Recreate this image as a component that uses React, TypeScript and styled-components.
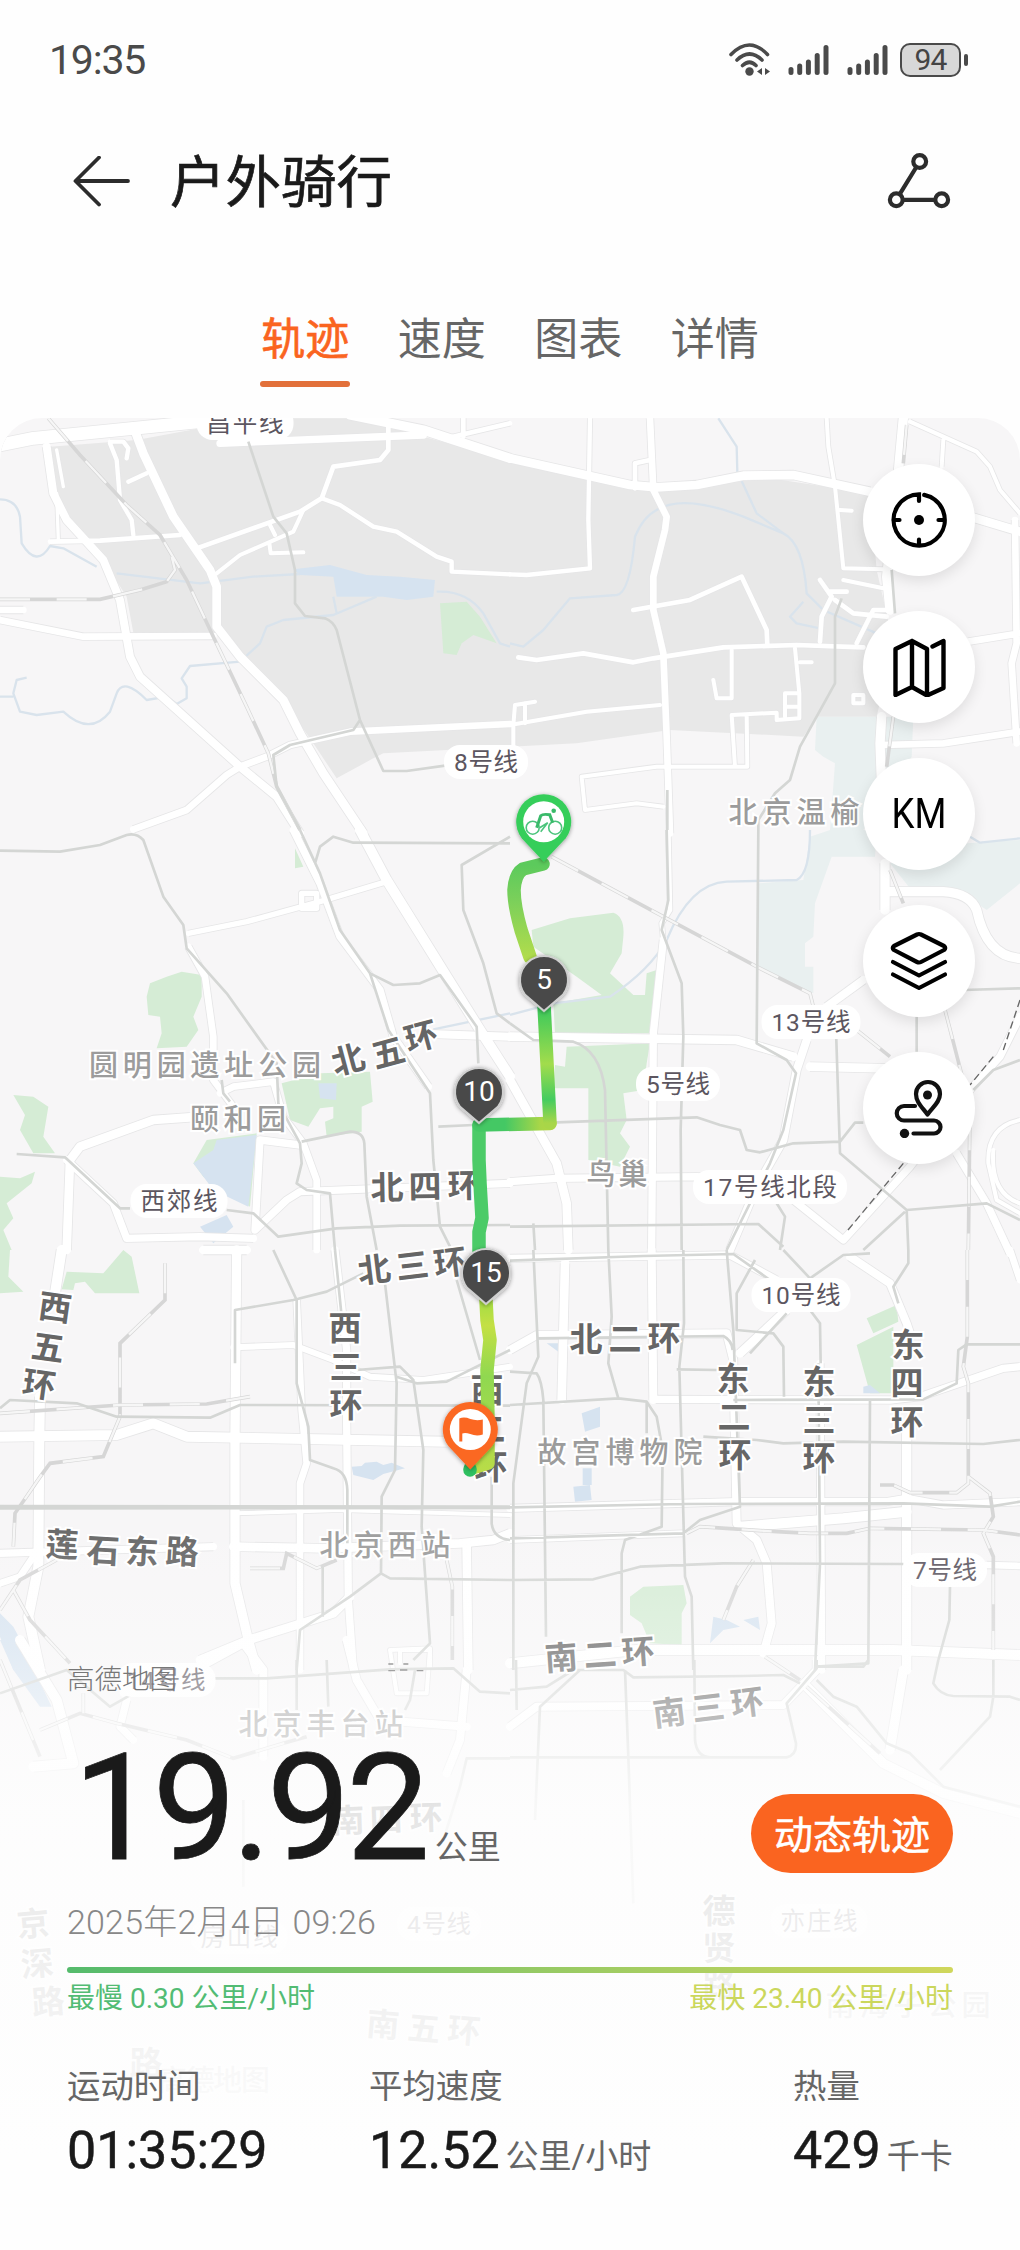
import React from "react";

import styled, { createGlobalStyle } from "styled-components";

const accent = "#FA6420";
const cjk = `"Noto Sans CJK SC", sans-serif`;
const uiFont = `Roboto, "Noto Sans CJK SC", sans-serif`;

const GlobalStyle = createGlobalStyle`
  * {
    box-sizing: border-box;
  }

  body {
    margin: 0;
    background: #fefefe;
    font-family: ${uiFont};
    color: #1a1a1a;
  }
`;

const Screen = styled.div`
  display: flex;
  flex-direction: column;
  width: 1020px;
  height: 2250px;
  overflow: hidden;
  background: #fefefe;
`;

// STATUS BAR //
const StatusBar = styled.div`
  display: flex;
  align-items: center;
  justify-content: space-between;
  height: 120px;
  padding: 0 59px 0 49px;
`;

const Clock = styled.span`
  font-size: 41px;
  line-height: 48px;
  color: #4a4a4a;
  letter-spacing: -1.2px;
`;

const StatusIcons = styled.div`
  display: flex;
  align-items: center;
`;

const SignalPair = styled.div`
  display: flex;
  gap: 18px;
  margin-left: 17px;
`;

const Battery = styled.div`
  position: relative;
  display: flex;
  align-items: center;
  justify-content: center;
  width: 61px;
  height: 34px;
  margin-left: 12px;
  border: 2px solid #4a4a4a;
  border-radius: 10px;
  background: #d8d8d8;
  font-size: 30px;
  line-height: 34px;
  letter-spacing: -0.8px;
  color: #444;

  &::after {
    content: "";
    position: absolute;
    right: -9px;
    top: 9px;
    width: 4px;
    height: 12px;
    border-radius: 2px;
    background: #4a4a4a;
  }
`;

// HEADER //
const Header = styled.header`
  display: flex;
  align-items: center;
  height: 124px;
  padding: 0 69px 0 72px;
`;

const Title = styled.h1`
  flex: 1;
  margin: -8px 0 0 38px;
  font-family: ${cjk};
  font-size: 55.5px;
  font-weight: 400;
  line-height: 70px;
  -webkit-text-stroke: 0.7px #1a1a1a;
`;

const Tabs = styled.nav`
  display: flex;
  justify-content: center;
  gap: 48.5px;
  height: 174px;
  padding-top: 62px;
`;

const Tab = styled.div<{ $active?: boolean }>`
  display: flex;
  flex-direction: column;
  align-items: center;
  font-family: ${cjk};
  font-size: 44px;
  line-height: 60px;
  color: ${(p) => (p.$active ? accent : "#666")};
  -webkit-text-stroke: ${(p) => (p.$active ? `0.6px ${accent}` : "0")};

  &::after {
    content: "";
    width: 90px;
    height: 6px;
    margin: 15px -1px 0;
    border-radius: 3px;
    background: ${(p) => (p.$active ? "#E2703A" : "transparent")};
  }
`;

// MAP PANEL //
const MapPanel = styled.main`
  position: relative;
  display: flex;
  flex-direction: column;
  justify-content: space-between;
  height: 1832px;
  overflow: hidden;
  border-radius: 42px 42px 0 0;
  background: #f7f6f7;
`;

const MapCanvas = styled.svg`
  position: absolute;
  inset: 0;
  width: 1020px;
  height: 1832px;
`;

const Fade = styled.div`
  position: absolute;
  inset: 1100px 0 0;
  background: linear-gradient(
    rgba(254, 254, 254, 0) 0,
    rgba(254, 254, 254, 0.3) 130px,
    rgba(254, 254, 254, 0.55) 195px,
    rgba(254, 254, 254, 0.84) 290px,
    rgba(254, 254, 254, 0.89) 400px,
    rgba(254, 254, 254, 0.94) 560px,
    rgba(254, 254, 254, 1) 640px
  );
`;

const Tools = styled.div`
  position: relative;
  display: flex;
  flex-direction: column;
  align-self: flex-end;
  gap: 35px;
  margin: 46px 45px 0 0;
`;

const ToolButton = styled.div`
  display: flex;
  align-items: center;
  justify-content: center;
  width: 112px;
  height: 112px;
  border-radius: 50%;
  background: #fff;
  box-shadow: 0 5px 14px rgba(0, 0, 0, 0.1);
`;

const UnitText = styled.span`
  font-family: Roboto, sans-serif;
  font-size: 42.5px;
  line-height: 48px;
  color: #000;
  transform: scaleX(0.86);
  white-space: nowrap;
`;

// SUMMARY //
const Summary = styled.section`
  position: relative;
  display: flex;
  flex-direction: column;
  padding: 0 67px 71px;
`;

const Attribution = styled.div`
  height: 32px;
  margin-top: -2px;
  font-family: ${cjk};
  font-size: 27.5px;
  font-weight: 300;
  line-height: 30px;
  color: #777;
`;

const DistanceRow = styled.div`
  display: flex;
  justify-content: space-between;
  height: 148px;
  margin-top: 40px;
`;

const Distance = styled.div`
  display: flex;
  align-items: flex-end;
  padding-left: 6px;
  font-family: Roboto, sans-serif;
  font-size: 149px;
  line-height: 148px;
  letter-spacing: -4.3px;
  -webkit-text-stroke: 0.8px #1a1a1a;
`;

const DistanceUnit = styled.span`
  margin: 0 0 17px 9px;
  font-family: ${cjk};
  font-size: 33px;
  line-height: 40px;
  letter-spacing: 0;
  color: #666;
  -webkit-text-stroke: 0;
`;

const ReplayButton = styled.div`
  width: 202px;
  height: 79px;
  margin-top: 60px;
  border-radius: 40px;
  background: ${accent};
  color: #fff;
  font-family: ${cjk};
  font-size: 39px;
  line-height: 77px;
  text-align: center;
  -webkit-text-stroke: 0.5px #fff;
`;

const DateText = styled.div`
  height: 40px;
  margin-top: 20px;
  font-size: 34px;
  font-weight: 300;
  line-height: 40px;
  letter-spacing: 0.2px;
  color: #888;
`;

const SpeedBar = styled.div`
  height: 6px;
  margin-top: 25px;
  border-radius: 3px;
  background: linear-gradient(90deg, #55bb6c, #92c965 50%, #d0d75c);
`;

const SpeedEnds = styled.div`
  display: flex;
  justify-content: space-between;
  height: 34px;
  margin-top: 8px;
  font-size: 28px;
  line-height: 36px;
`;

const SpeedEnd = styled.span<{ $color: string }>`
  color: ${(p) => p.$color};
  white-space: pre;
`;

const Metrics = styled.div`
  display: grid;
  grid-template-columns: 302px 424px 160px;
  margin-top: 51px;
`;

const MetricLabel = styled.div`
  height: 40px;
  font-family: ${cjk};
  font-size: 33.4px;
  line-height: 36px;
  color: #666;
`;

const MetricValue = styled.div`
  display: flex;
  align-items: baseline;
  height: 60px;
  margin-top: 13px;
  font-size: 52px;
  line-height: 63px;
  white-space: nowrap;
  -webkit-text-stroke: 0.5px #1a1a1a;
`;

const MetricUnit = styled.span`
  margin-left: 6px;
  font-size: 33px;
  color: #666;
  -webkit-text-stroke: 0;
`;

// MAP DATA //
// Every tile is drawn on a grid three times finer than the screen.
type Road = [number, string];

interface Tile {
  x: number;
  y: number;
  built?: string;
  park?: string;
  wet?: string;
  lake?: string;
  stream?: string;
  roads: Road[];
  metro?: string;
  rail?: string;
  dash?: string;
}

const tiles: Tile[] = [
  {
    x: 0,
    y: 410,
    built:
      "M150 110L410 90L600 55L700 25L1080 25L1160 50L1530 150V1010L1150 1030L1120 1045L1010 1105L940 1000L850 870L650 670L400 668L380 560L290 420L170 290Z",
    park: "M1320 580L1400 575L1440 620L1490 700L1420 675L1385 700L1370 735L1330 730Z",
    lake: "M880 478L990 465L1100 495L1200 500L1305 510L1300 560L1220 570L1150 560L1010 560L1000 500L900 495Z",
    stream:
      "M0 268Q50 268 60 320L65 400Q110 475 150 408L190 415L290 470M80 803L50 810L40 850L60 905L110 915L190 905Q270 980 330 905L350 850Q370 800 440 870L500 860L530 882L560 865L560 830L545 805L570 768L720 755L780 700L800 650L850 630L1000 615L1130 560M350 490L600 520L760 500L900 492M0 860L40 860M1000 560L1010 610M1310 545Q1400 540 1450 610L1500 700L1530 710",
    roads: [
      [38, "M0 105L100 85L400 55L600 35"],
      [26, "M400 50L430 130L520 320L630 480L650 530V650L720 740L850 870L900 970L970 1090L1090 1270"],
      [24, "M140 110L160 250L200 330L310 450L360 570L390 740L420 800L720 1070L830 1160L900 1270"],
      [22, "M660 100L1270 75"],
      [28, "M1050 15L1270 60L1530 145"],
      [14, "M1340 85L1530 40M1390 25V80"],
      [14, "M1165 40V120L1140 150L1000 170L965 265L900 305L590 415"],
      [13, "M965 265L1020 285L1120 350L1190 365L1310 440L1355 455V485L1530 493"],
      [12, "M910 300L880 365L720 435L650 490M810 345L825 375M808 400L812 430L910 427"],
      [14, "M150 395L300 392L540 375"],
      [13, "M330 100L350 150L360 270L395 330L400 375M330 95H370L385 115L380 145M385 215L440 190"],
      [10, "M170 120L190 230M170 250L175 390"],
      [20, "M0 630L250 680L640 678M0 600H70"],
      [20, "M400 1258L560 1200L680 1095L720 1070L800 1040L870 1005L1050 965L1530 942"],
    ],
    metro:
      "M745 95L820 320L860 370L885 480V580L915 618L975 625Q1000 635 1010 660L1080 930L1150 1083H1220L1335 1067M1080 930L1060 960L870 1005L820 1035L830 1130L900 1260",
    rail: "M145 25L240 135L380 285L480 375L560 510L640 680L740 890L805 1030L830 1130L900 1260M0 568H300L420 540L500 515L525 480L515 440",
  },
  {
    x: 510,
    y: 410,
    built:
      "M0 150L420 240L780 205L1080 250L1100 480L1150 700L1100 920H920L880 980L480 960L200 1000L0 1010Z",
    wet: "M920 920H1210L1205 1040L1060 1260H960L975 1060L940 1040L915 1020Z",
    stream:
      "M0 700L40 710L100 660L180 565L320 555Q360 550 375 380Q400 320 440 300Q520 250 700 320L820 370Q880 400 890 550L940 600L1100 670M625 25L680 110L682 185L740 310L820 370M930 655L860 640L840 620L880 575",
    roads: [
      [26, "M0 145L360 225L440 232L560 225L700 197L850 195L1080 245M1380 320L1530 365"],
      [20, "M420 25L430 240L470 320L465 360L430 500V600L460 730L470 980L480 1270"],
      [13, "M240 25L235 330L240 475L50 495L0 493"],
      [14, "M375 235V160L420 150"],
      [14, "M25 742L80 750L220 730L370 757L430 745L640 712L860 705L1060 712"],
      [14, "M370 600L540 570L695 500L770 660L772 705"],
      [12, "M950 25L955 110L975 230L1000 475L1120 478M1000 510L1120 535M990 300L1025 302"],
      [14, "M930 695L935 620L965 560L930 510M960 545H1010M975 570L1030 610L1130 620M1040 700L1090 600H1150"],
      [28, "M1180 25L1160 240L1130 500L1140 600M1115 920L1110 1000L1120 1260"],
      [12, "M1200 35L1400 125L1440 170L1470 240L1530 310M1300 90L1295 170"],
      [20, "M1375 695L1530 670M1115 1005L1300 1000L1530 965M1515 330L1520 700L1505 760L1520 1000"],
      [12, "M665 720V865H620L610 810M855 715L868 850V925L800 930V908L665 915L675 1070M710 915L712 1070L440 1070L215 1100L225 1200L380 1180L460 1190M825 850V920M825 850H860M825 890H860M870 757H905M1030 855H1060V880H1030Z"],
      [12, "M0 945L230 905L450 885M10 945L15 885L75 875M45 880V940M10 950V1010"],
    ],
    metro: "M995 565L975 620V820L870 1010L840 1110L795 1150L745 1230V1260M472 1140V1260M1145 480L1155 610",
    rail: "M1190 45L1180 160M1150 920L1130 1070",
  },
  {
    x: 0,
    y: 830,
    park: "M450 460L500 440L545 425L605 435V500L580 560L595 600L560 650L470 655L485 610L480 560L445 555L440 500ZM40 795L100 800L145 830L130 920L165 970H100L60 900L75 855ZM0 1040L60 1045L105 1025L95 1060L20 1120L40 1165L10 1200L35 1260H0ZM845 760L960 730L1110 725L1118 815L1085 830V905L980 920L975 875L1000 865V830L960 835L925 890L870 870ZM885 55L910 110L885 115ZM620 930L770 910L750 1130L610 1040L580 1000Z",
    lake: "M650 930L770 915L745 1130L640 1080L580 1000L640 960ZM600 1190L680 1155L700 1190L640 1240ZM955 760H1010L1008 810L960 805Z",
    stream: "M1300 598L1530 550",
    roads: [
      [20, "M565 350L615 440L640 620V750L700 830"],
      [16, "M565 310L740 275L960 215L1160 155M905 190H950V235H905Z"],
      [22, "M880 0L960 160L1020 320L1140 480L1180 620L1285 770"],
      [30, "M1080 0L1160 150L1340 440L1440 600L1530 740"],
      [24, "M1290 612L1530 620"],
      [26, "M200 1260L210 990L240 950L460 870L600 860"],
      [22, "M200 990L340 1120L380 1225L600 1220L760 1225"],
      [20, "M660 790L700 770L820 755L850 860L910 940L950 1050V1260"],
      [22, "M900 945L780 930L765 1200L860 1110L900 1085L1530 1060"],
    ],
    metro:
      "M0 62L180 65L300 45L380 15Q410 8 430 30L490 200L550 285L560 355L680 490L830 700L835 820L900 940L905 1000L890 1060L920 1080L990 1090L1005 1260M905 935L1050 905Q1090 905 1093 940L1100 1100L1130 1260M900 0L960 130L1020 300L1110 430L1180 465L1260 460L1320 435L1430 590L1435 700M945 100L960 50L1000 20L1060 38L1530 40M1530 20L1385 105L1390 240L1450 400L1490 550L1530 580M1110 430L1165 600L1290 790L1300 990L1320 1190L1350 1250M50 972L195 982L360 1135H390M680 1140L760 1150L835 1220L1010 1195L1200 1187L1530 1185M1315 890L1420 885M665 750L670 790L690 815",
  },
  {
    x: 510,
    y: 830,
    park: "M65 300L180 265L310 248Q345 260 340 320L335 370L300 430L370 495H405L410 430L440 420L430 610H135L130 520L275 495L200 440L70 350ZM170 650L420 640L410 700L400 780L340 790L350 870L330 910L360 950L330 1010L235 990V775H130L135 705L165 710Z",
    wet: "M745 160L880 150L900 20L960 0H1100L1095 80H965L915 220L910 320L885 340V410H910V490L745 410ZM1140 100L1370 40L1530 30V160L1430 240L1340 180L1200 175Z",
    stream:
      "M0 555L130 520L300 500Q420 420 470 330Q540 160 650 155L860 150Q900 130 900 0M1380 20L1410 38L1530 25",
    roads: [
      [26, "M0 620L680 630L850 680M900 710L1130 715"],
      [22, "M460 330L430 610L425 1260"],
      [14, "M475 0L480 240L455 280L460 330"],
      [28, "M1125 100V240M1140 185H1300Q1380 190 1400 240Q1430 380 1530 385"],
      [24, "M950 530L1060 450"],
      [24, "M890 630L860 720L820 930L740 1070L660 1260"],
      [26, "M0 750L140 1000L170 1120L175 1260"],
      [22, "M0 1055L140 1045L560 1040L740 1050"],
      [22, "M850 1110L1000 1230L1200 1010L1380 780L1470 680L1530 560"],
      [22, "M1340 970L1430 1120L1500 1270"],
      [12, "M1530 870Q1430 890 1435 1000L1460 1110L1530 1150M1530 1120Q1440 1090 1450 960"],
    ],
    metro:
      "M745 0L740 640L830 690L858 730L820 900L780 1000L650 1260M470 0L475 210L455 300L515 460L520 620L512 900L515 1260M140 877L560 862L630 885L690 900L710 960L750 967L850 940L990 935M978 600L990 970L1190 1140L1430 1120L1530 1170M990 935L1035 878H1060M0 1190L745 1182L820 1250M0 580L70 630L190 635Q270 660 285 780L295 1260M1220 560V665M1190 1140L1195 1260M1185 1145L1060 1260M1360 480L1530 475M1390 780L1450 720L1530 690M70 1180L75 1260M800 1120L825 1160L810 1260",
    rail: "M125 80L460 260L740 410L900 490L910 530M1305 540L1380 830L1375 1260M1140 120L1180 220M1040 600L1140 680",
    dash: "M1530 510L1480 660M1450 680L1380 765M1180 1000L1010 1205",
  },
  {
    x: 0,
    y: 1250,
    park: "M200 65L310 70L370 0L395 20L418 130H285L255 95L225 100L220 120L185 118ZM0 0H30L25 80L70 125L0 130Z",
    lake: "M1055 650L1085 648L1095 638L1130 635L1150 645L1175 638L1215 655L1150 672L1120 690L1060 675ZM0 1090L40 1130L110 1260H40L0 1160Z",
    roads: [
      [30, "M185 0L165 130M120 440L118 560L115 950L85 1100L120 1260"],
      [30, "M0 560L350 555L460 520L560 560L1340 575"],
      [28, "M710 0L705 560V1000L745 1170L770 1260"],
      [26, "M610 0H740"],
      [20, "M890 150L905 480L920 640L900 700V1260"],
      [26, "M700 890L980 895L1380 880L1480 870L1530 850"],
      [22, "M1005 0L1040 300V520L1045 1050L1060 1260"],
      [18, "M700 292L880 285L1000 330L1110 380L1270 390L1530 350"],
      [22, "M0 910L640 890"],
      [26, "M600 1230L745 1170L1000 1090L1050 1040"],
      [26, "M1400 890L1405 1260"],
      [20, "M0 1000L60 980L100 920"],
      [12, "M705 790L1020 780L1530 795M1200 1240V1200H1290V1250"],
    ],
    metro:
      "M0 768L1530 770M0 775L1530 774M0 475L30 450L230 460L350 500L630 503L720 465L1530 467M820 0L890 150V400L925 530L930 630L1000 655Q1040 665 1042 720V880M705 340V180L880 150L980 125L1090 70M1155 100L1190 400L1185 660L1145 740L1143 970L1050 1040L900 1140L890 1260M1005 0L1025 200M1070 360L1200 350L1240 390L1270 600L1265 830L1290 1180L1240 1230M1143 970L1170 985L1530 990M968 950V1100M1370 90L1440 330M1475 680V820Q1480 865 1530 870M1190 380L1250 400L1340 395L1530 300",
    rail: "M495 40V150L360 280V500L310 620L150 640Q120 680 100 710L45 790L40 890M0 490L360 465L620 462L750 440M1340 930L1357 1010V1230M0 1080L60 990L170 930M40 1020L90 1110L210 1240M750 955H850L860 910L950 955L1010 930",
  },
  {
    x: 510,
    y: 1250,
    park: "M1070 205L1160 165L1165 215L1090 250ZM1040 285L1150 230V430H1080ZM360 1040L400 1010L520 1005L530 1060L515 1090V1185L420 1180L395 1120L360 1095Z",
    lake: "M215 490L270 470V530L225 545ZM218 655H245V705H218ZM190 710L240 705L245 750L195 755ZM610 1100L650 1110L690 1130L640 1140L600 1180ZM700 1110L745 1100L750 1140ZM1060 410L1080 405L1110 430H1060ZM110 280L150 280L145 305Z",
    roads: [
      [22, "M0 25L660 15L800 90"],
      [26, "M165 40L155 450"],
      [24, "M425 0L430 450"],
      [24, "M0 300L80 255L650 250L670 330L680 820L740 870L770 940L785 1120L760 1210"],
      [22, "M430 448L1140 450L1230 440L1480 355L1530 350"],
      [22, "M0 775L680 755L1130 755L1190 745L1300 765L1530 755"],
      [30, "M690 830L1000 805L1190 785"],
      [18, "M0 870L520 850"],
      [30, "M0 1240L380 1200L1150 1200L1530 1215"],
      [28, "M1190 550V1260"],
      [24, "M1020 20L1140 100L1190 220L1200 250"],
      [22, "M930 340L935 1260"],
      [26, "M690 310L830 180"],
      [20, "M1500 0L1530 90M1430 945L1530 948"],
    ],
    metro:
      "M70 0L85 320L50 400L10 700V1260M0 365L80 370Q95 390 100 450L108 1160M295 0L305 200L295 340L325 445L0 465M325 445L410 455L440 500L458 600L455 830L345 870L335 910V1150M520 0L522 220L508 350L525 980L545 1040L550 1260M650 0L670 240L690 770L570 810L520 850L0 865M0 32L400 18L670 12L780 90M0 772L520 762L1180 760L1440 770L1530 755M0 990L250 988L390 950L640 940L1180 942M925 340L930 940L915 1260M1080 450L1075 1240L920 1250M735 30L680 130V240L790 250L820 290L822 440M80 265L640 258Q665 270 668 300M410 455V550M580 560L740 570L820 580L1000 575L1420 582L1530 570M670 450L1240 448L1340 400L1345 300L1370 283H1530M500 358L620 360M720 310L830 190M900 180L930 220L932 340M820 0L900 85L1000 15L1080 10M1195 0V40L1150 110L1165 160M1320 1010L1318 1110L1285 1230",
    rail: "M1372 0V260L1360 350L1375 400V700L1340 728H1200L1150 705H1110M530 850L570 830L800 845L900 850H1010L1080 835L1420 840L1530 855M1375 680L1440 730L1450 800L1420 850L1450 920V1200M730 930L680 1010L640 1110",
  },
  {
    x: 0,
    y: 1640,
    lake: "M0 0H60L155 200H120L40 90Z",
    roads: [
      [30, "M60 0L170 180L220 370L100 380"],
      [24, "M620 70L730 10L790 90V350"],
      [22, "M370 160L620 90M380 180L360 260L400 300"],
      [24, "M1040 0L1070 120L1140 240L1400 260"],
      [24, "M1400 90L1380 300L1340 400"],
      [12, "M1170 30L1290 25L1280 160H1190Z"],
    ],
    metro:
      "M0 160L200 90L330 200L400 160M640 115H800L1170 88L1360 85L1440 155L1530 160M890 60V210M980 60L985 200M1245 90L1230 180L1215 210M1530 355H1400L1380 440L1330 600M730 480V740",
    rail: "M0 60L120 350M120 270L240 220L350 250L560 300L700 355L850 310L920 290M250 160V220",
    dash: "M1165 72H1180M1165 92H1185M1200 90H1225M1210 72H1225M1250 92H1270",
  },
  {
    x: 510,
    y: 1640,
    roads: [
      [24, "M0 260L80 200L820 195L920 90V60"],
      [28, "M1180 90L1140 330"],
      [28, "M890 140L1120 370L1300 460L1530 520"],
    ],
    metro:
      "M18 60L20 210M0 150L110 140L190 90H340L370 112L700 108L820 105L870 130M345 90L355 350L370 790M553 60L555 300Q560 350 600 352H830Q860 345 858 310L830 190L920 85V60M920 80H1060L1075 60M1285 60L1270 130Q1290 165 1330 168L1500 170L1530 180M0 352H600M210 90L90 200L75 540M920 120L970 170L1040 200L1130 310L1200 340L1300 440L1530 500M1450 170L1440 230L1290 390M1450 60V170",
    rail: "M765 50L870 120M890 140L1110 340",
  },
];

interface Line {
  text: string;
  x: number;
  y: number;
  w: number;
}

const metroNames: Line[] = [
  { text: "昌平线", x: 245, y: 423, w: 77 },
  { text: "8号线", x: 486, y: 762, w: 64 },
  { text: "西郊线", x: 179, y: 1201, w: 77 },
  { text: "13号线", x: 811, y: 1022, w: 79 },
  { text: "5号线", x: 678, y: 1084, w: 64 },
  { text: "17号线北段", x: 770, y: 1187, w: 134 },
  { text: "10号线", x: 801, y: 1295, w: 79 },
  { text: "7号线", x: 945, y: 1570, w: 64 },
  { text: "14号线", x: 166, y: 1680, w: 79 },
  { text: "4号线", x: 439, y: 1924, w: 64 },
  { text: "房山线", x: 239, y: 1937, w: 77 },
  { text: "亦庄线", x: 819, y: 1921, w: 77 },
];

const placeNames: Line[] = [
  { text: "北京温榆", x: 794, y: 812, w: 131 },
  { text: "圆明园遗址公园", x: 205, y: 1065, w: 232 },
  { text: "颐和园", x: 238, y: 1119, w: 96 },
  { text: "鸟巢", x: 617, y: 1174, w: 61 },
  { text: "故宫博物院", x: 620, y: 1452, w: 165 },
  { text: "北京西站", x: 385, y: 1545, w: 131 },
  { text: "北京丰台站", x: 321, y: 1724, w: 165 },
  { text: "南海子公园", x: 908, y: 2005, w: 165 },
  { text: "高德地图", x: 214, y: 2080, w: 112 },
];

// One centre point for each character of the road name.
const roadNames: { text: string; angle: number; at: [number, number][] }[] = [
  { text: "北五环", angle: -15, at: [[348, 1059], [388, 1052], [421, 1036]] },
  { text: "北四环", angle: -1, at: [[387, 1187], [425, 1186], [464, 1185]] },
  { text: "北三环", angle: -7, at: [[374, 1269], [412, 1265], [450, 1262]] },
  { text: "北二环", angle: 0, at: [[586, 1338], [625, 1338], [664, 1337]] },
  { text: "西五环", angle: 8, at: [[55, 1307], [48, 1347], [39, 1384]] },
  { text: "西三环", angle: 0, at: [[345, 1327], [346, 1366], [346, 1404]] },
  { text: "西二环", angle: 0, at: [[487, 1389], [489, 1428], [491, 1466]] },
  { text: "莲石东路", angle: 3, at: [[62, 1544], [103, 1550], [142, 1551], [182, 1551]] },
  { text: "东二环", angle: 0, at: [[733, 1378], [734, 1416], [735, 1454]] },
  { text: "东三环", angle: 0, at: [[819, 1381], [819, 1419], [819, 1457]] },
  { text: "东四环", angle: 0, at: [[908, 1344], [907, 1382], [907, 1421]] },
  { text: "南二环", angle: -4, at: [[561, 1657], [600, 1654], [638, 1651]] },
  { text: "南三环", angle: -7, at: [[669, 1712], [708, 1707], [747, 1702]] },
  { text: "南四环", angle: -2, at: [[348, 1820], [386, 1819], [426, 1817]] },
  { text: "南五环", angle: 5, at: [[383, 2024], [424, 2028], [464, 2030]] },
  { text: "京深路", angle: -5, at: [[33, 1923], [37, 1963], [48, 2001]] },
  { text: "德贤路", angle: 0, at: [[719, 1910], [719, 1947], [719, 1984]] },
  { text: "路", angle: 0, at: [[146, 2062]] },
];

const ROAD_SIZE = 33;

const RoadName: React.FunctionComponent<(typeof roadNames)[number]> = ({ text, angle, at }) => {
  const a = (angle * Math.PI) / 180;
  const dx = -ROAD_SIZE / 2;
  const dy = ROAD_SIZE * 0.38;
  const xs = at.map(([x]) => (x + dx * Math.cos(a) - dy * Math.sin(a)).toFixed(1));
  const ys = at.map(([, y]) => (y + dx * Math.sin(a) + dy * Math.cos(a)).toFixed(1));
  return (
    <text x={xs.join(" ")} y={ys.join(" ")} rotate={angle}>
      {text}
    </text>
  );
};

const drop = (r: number, tip: number) =>
  `M0 ${tip}L${-0.8 * r} ${0.6 * r}A${r} ${r} 0 1 1 ${0.8 * r} ${0.6 * r}Z`;

const KmPin: React.FunctionComponent<{ x: number; y: number; km: number }> = ({ x, y, km }) => (
  <g transform={`translate(${x} ${y})`}>
    <path d={drop(24, 31)} fill="#4a4a4a" stroke="#cfcfcf" strokeWidth="2" filter="url(#pinShadow)" />
    <text y="9" textAnchor="middle" fontFamily="Roboto" fontSize="28" fill="#fff">
      {km}
    </text>
  </g>
);

const layer = (key: "built" | "park" | "wet" | "lake" | "stream" | "metro" | "rail" | "dash") =>
  tiles
    .filter((t) => t[key])
    .map((t) => <path key={`${t.x}-${t.y}`} d={t[key]} transform={`translate(${t.x} ${t.y}) scale(.33333)`} />);

const roadLayer = (extra: number) =>
  tiles.map((t) => (
    <g key={`${t.x}-${t.y}`} transform={`translate(${t.x} ${t.y}) scale(.33333)`}>
      {t.roads.map(([width, d]) => (
        <path key={d} d={d} strokeWidth={width + extra} />
      ))}
    </g>
  ));

const CityMap: React.FunctionComponent = () => (
  <MapCanvas viewBox="0 418 1020 1832">
    <defs>
      <filter id="pinShadow" x="-30%" y="-30%" width="160%" height="160%">
        <feDropShadow dx="0" dy="1" stdDeviation="2" floodOpacity="0.4" />
      </filter>
      <linearGradient id="leg1" gradientUnits="userSpaceOnUse" x1="0" y1="865" x2="0" y2="957">
        <stop offset="0" stopColor="#5cca5c" />
        <stop offset="0.4" stopColor="#7cd05a" />
        <stop offset="1" stopColor="#b0dc4c" />
      </linearGradient>
      <linearGradient id="leg2" gradientUnits="userSpaceOnUse" x1="0" y1="1005" x2="0" y2="1123">
        <stop offset="0" stopColor="#36c85c" />
        <stop offset="0.5" stopColor="#a2dc4c" />
        <stop offset="0.8" stopColor="#44cc60" />
        <stop offset="1" stopColor="#a8d648" />
      </linearGradient>
      <linearGradient id="leg3" gradientUnits="userSpaceOnUse" x1="555" y1="0" x2="505" y2="0">
        <stop offset="0" stopColor="#b4d644" />
        <stop offset="0.3" stopColor="#a8d648" />
        <stop offset="1" stopColor="#44c864" />
      </linearGradient>
      <linearGradient id="leg5" gradientUnits="userSpaceOnUse" x1="0" y1="1300" x2="0" y2="1470">
        <stop offset="0" stopColor="#a4dc44" />
        <stop offset="0.15" stopColor="#c4e044" />
        <stop offset="0.45" stopColor="#90d850" />
        <stop offset="1" stopColor="#b8dc48" />
      </linearGradient>
    </defs>

    <g fill="#e8e8e8">{layer("built")}</g>
    <g fill="#d5ecd5">{layer("park")}</g>
    <g fill="#e9f0f0">{layer("wet")}</g>
    <g fill="#d6e3f0">{layer("lake")}</g>
    <g fill="none" stroke="#d9e3ec" strokeWidth="7" strokeLinejoin="round">
      {layer("stream")}
    </g>
    <g fill="none" stroke="#e6e6e7" strokeLinejoin="round">
      {roadLayer(5)}
    </g>
    <g fill="none" stroke="#fff" strokeLinejoin="round" strokeLinecap="round">
      {roadLayer(0)}
    </g>
    <g fill="none" stroke="#d6d6d6" strokeWidth="11">
      {layer("rail")}
    </g>
    <g fill="none" stroke="#f6f6f6" strokeWidth="7" strokeDasharray="90 80">
      {layer("rail")}
    </g>
    <g fill="none" stroke="#d4d6d4" strokeWidth="8" strokeLinejoin="round">
      {layer("metro")}
    </g>
    <g fill="none" stroke="#666" strokeWidth="4" strokeDasharray="22 12">
      {layer("dash")}
    </g>

    <g fontFamily={cjk} fontSize="29" fontWeight="500" fill="#9c9c9c" stroke="#fff" strokeWidth="4" paintOrder="stroke">
      {placeNames.map(({ text, x, y, w }) => (
        <text key={text} x={x - w / 2} y={y + 11} textLength={w}>
          {text}
        </text>
      ))}
    </g>
    <g fontFamily={cjk} fontSize={ROAD_SIZE} fontWeight="700" fill="#666" stroke="#fff" strokeWidth="4" paintOrder="stroke">
      {roadNames.map((road) => (
        <RoadName key={road.text} {...road} />
      ))}
    </g>
    <g fontFamily={uiFont} fontSize="24.5" fill="#5c5660">
      {metroNames.map(({ text, x, y, w }) => (
        <g key={text}>
          <rect x={x - w / 2 - 10} y={y - 17} width={w + 20} height="34" rx="16" fill="#fff" />
          <text x={x - w / 2} y={y + 9} textLength={w}>
            {text}
          </text>
        </g>
      ))}
    </g>

    <g fill="none" strokeWidth="13.5" strokeLinejoin="round" strokeLinecap="round">
      <path d="M543 864L523 869Q515 874 514 890Q514 905 521 930L530 957" stroke="url(#leg1)" />
      <path d="M479 1125V1160L480 1183L482 1218L479 1232V1265" stroke="#4ccb68" />
      <path d="M550 1123.5L479 1125" stroke="url(#leg3)" />
      <path d="M544 1005L547 1063L550 1123" stroke="url(#leg2)" />
      <path d="M486 1300L487 1320L490 1340L487 1370L488 1420V1463L472 1468" stroke="url(#leg5)" />
      <path d="M470 1469V1470" stroke="#2fc060" />
    </g>

    <g transform="translate(543.7 821.7)">
      <path d={drop(27.5, 40)} fill="#36ce5a" filter="url(#pinShadow)" />
      <circle r="20.5" fill="#fff" />
      <g fill="none" stroke="#4cc47c" strokeWidth="1.6">
        <circle cx="-11" cy="6" r="6.5" />
        <circle cx="11.5" cy="6" r="6.5" />
        <path d="M-4 6L4 1L-3 10" />
      </g>
      <path d="M-7 6L-3 -6Q-1 -8 6 -7L9 1" fill="none" stroke="#3aba6a" strokeWidth="3" />
      <circle cx="10" cy="-11" r="2.3" fill="#3aba6a" />
    </g>
    <KmPin x={544} y={980} km={5} />
    <KmPin x={479} y={1092} km={10} />
    <KmPin x={486} y={1273} km={15} />
    <g transform="translate(470.3 1429.5)">
      <path d={drop(27.5, 40)} fill="#fb6722" filter="url(#pinShadow)" />
      <circle r="20.5" fill="#fff" />
      <path d="M-11 -11Q-6 -13 0 -10.5Q6 -8.500 12.500 -10V5Q6 7 0 4.500Q-5 3 -8 4V12H-11Z" fill="#fb6722" />
    </g>
  </MapCanvas>
);

// ICONS //
const WifiIcon = () => (
  <svg width="42" height="34" viewBox="0 0 42 34" fill="none" stroke="#4a4a4a" strokeWidth="3.6" strokeLinecap="round">
    <path d="M2 11.500Q20.500 -7.500 38.500 11.500M8 17Q20.500 5 33 17M13.500 22.500Q20.500 16 27 22.500" />
    <circle cx="20.500" cy="28.500" r="4.200" fill="#4a4a4a" stroke="none" />
    <path d="M33 25V32L28 28.500ZM36 25V32L41 28.500Z" fill="#4a4a4a" stroke="none" />
  </svg>
);

const SignalIcon = () => (
  <svg width="41" height="34" viewBox="0 0 41 34" stroke="#4a4a4a" strokeWidth="5" strokeLinecap="round">
    <path d="M3 26.500V29.500M11.700 23V29.500M20.400 19V29.500M29.200 12.500V29.500M38 4.500V29.500" />
  </svg>
);

const BackIcon = () => (
  <svg width="60" height="52" viewBox="0 0 60 52" fill="none" stroke="#2c2c2c" strokeWidth="3.8" strokeLinecap="round" strokeLinejoin="round">
    <path d="M27 1.500L3.500 25L27 48.500M4 25H56" />
  </svg>
);

const TrackShareIcon = () => (
  <svg width="64" height="58" viewBox="0 0 64 58" fill="none" stroke="#2c2c2c" strokeWidth="4.200">
    <circle cx="32.700" cy="8.500" r="6.400" />
    <circle cx="9.300" cy="46.800" r="6.400" />
    <circle cx="54.700" cy="46.800" r="6.400" />
    <path d="M29.400 14L12.600 41.300M15.700 46.800H48.300" />
  </svg>
);

const LocateIcon = () => (
  <svg width="60" height="60" viewBox="0 0 60 60" fill="none" stroke="#000" strokeWidth="4.200" strokeLinecap="round">
    <path d="M35.200 4.900A25.600 25.600 0 1 1 30 4.400V11M4.400 30H10.500M49.500 30H55.600M30 49.500V55.600" />
    <circle cx="30" cy="30" r="5" fill="#000" stroke="none" />
  </svg>
);

const MapIcon = () => (
  <svg width="60" height="60" viewBox="0 0 60 60" fill="none" stroke="#000" strokeWidth="4.400" strokeLinecap="round" strokeLinejoin="round">
    <path d="M43.500 9.500L54.500 4V51L38 58.500L23 50L6.500 58V12L23 4L38 12V58M23 4V50" />
  </svg>
);

const LayersIcon = () => (
  <svg width="60" height="60" viewBox="0 0 60 60" fill="none" stroke="#000" strokeWidth="4.200" strokeLinecap="round" strokeLinejoin="round">
    <path d="M28 3.500Q30 2.500 32 3.500L55 15Q57.500 17 55 19L32 31Q30 32 28 31L5 19Q2.500 17 5 15ZM4 31L30 44.500L56 31M4 43.500L30 57L56 43.500" />
  </svg>
);

const RouteIcon = () => (
  <svg width="60" height="60" viewBox="0 0 60 60" fill="none" stroke="#111" strokeWidth="4.200" strokeLinecap="round" strokeLinejoin="round">
    <path d="M38.500 36.500C33 29 27 24 27 16A12 12 0 0 1 51 16C51 24 44 29 38.500 36.500Z" />
    <circle cx="38.500" cy="17" r="4.500" fill="#111" stroke="none" />
    <path d="M26 28H15A7.200 7.200 0 0 0 15 42.500H45A6.500 6.500 0 0 1 45 55.500H24.500" />
    <circle cx="15.500" cy="55.500" r="4.700" fill="#111" stroke="none" />
  </svg>
);

interface MetricProps {
  label: string;
  value: string;
  unit?: string;
}

const Metric: React.FunctionComponent<MetricProps> = ({ label, value, unit }) => (
  <div>
    <MetricLabel>{label}</MetricLabel>
    <MetricValue>
      {value}
      {unit && <MetricUnit>{unit}</MetricUnit>}
    </MetricValue>
  </div>
);

const App: React.FunctionComponent = () => {
  return (
    <Screen>
      <GlobalStyle />
      <StatusBar>
        <Clock>19:35</Clock>
        <StatusIcons>
          <WifiIcon />
          <SignalPair>
            <SignalIcon />
            <SignalIcon />
          </SignalPair>
          <Battery>94</Battery>
        </StatusIcons>
      </StatusBar>
      <Header>
        <BackIcon />
        <Title>户外骑行</Title>
        <TrackShareIcon />
      </Header>
      <Tabs>
        <Tab $active>轨迹</Tab>
        <Tab>速度</Tab>
        <Tab>图表</Tab>
        <Tab>详情</Tab>
      </Tabs>
      <MapPanel>
        <CityMap />
        <Fade />
        <Tools>
          <ToolButton>
            <LocateIcon />
          </ToolButton>
          <ToolButton>
            <MapIcon />
          </ToolButton>
          <ToolButton>
            <UnitText>KM</UnitText>
          </ToolButton>
          <ToolButton>
            <LayersIcon />
          </ToolButton>
          <ToolButton>
            <RouteIcon />
          </ToolButton>
        </Tools>
        <Summary>
          <Attribution>高德地图</Attribution>
          <DistanceRow>
            <Distance>
              19.92<DistanceUnit>公里</DistanceUnit>
            </Distance>
            <ReplayButton>动态轨迹</ReplayButton>
          </DistanceRow>
          <DateText>2025年2月4日 09:26</DateText>
          <SpeedBar />
          <SpeedEnds>
            <SpeedEnd $color="#52BC74">最慢 0.30 公里/小时</SpeedEnd>
            <SpeedEnd $color="#CBD75C">最快 23.40 公里/小时</SpeedEnd>
          </SpeedEnds>
          <Metrics>
            <Metric label="运动时间" value="01:35:29" />
            <Metric label="平均速度" value="12.52" unit="公里/小时" />
            <Metric label="热量" value="429" unit="千卡" />
          </Metrics>
        </Summary>
      </MapPanel>
    </Screen>
  );
};

export default App;
